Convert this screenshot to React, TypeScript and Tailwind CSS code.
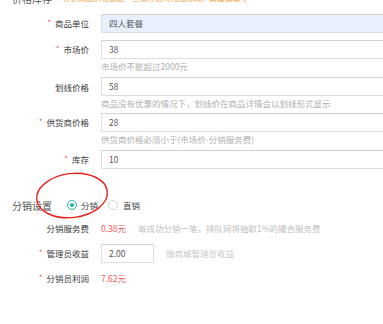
import React from "react";

const Star = () => <span className="text-[#f25a5a] text-[8px] mr-[4px] relative top-[-1px]">*</span>;

function Label({ req, children }: { req?: boolean; children: React.ReactNode }) {
  return (
    <div className="w-[89px] shrink-0 text-right text-[8.5px] text-[#3a3a3a] leading-[12px]">
      {req && <Star />}
      {children}
    </div>
  );
}

function Input({ value, filled, w }: { value: string; filled?: boolean; w?: string }) {
  return (
    <div
      className={`ml-[12px] h-[19px] flex items-center pl-[7px] border border-[#dedede] border-t-[#d2d2d2] text-[8.5px] text-[#555] ${
        filled ? "bg-[#e8f0fe] text-[#222]" : "bg-white"
      } ${w ?? "w-[320px] shrink-0"}`}
    >
      {value}
    </div>
  );
}

function Help({ children, mt }: { children: React.ReactNode; mt: string }) {
  return (
    <div className={`pl-[101px] h-[12px] leading-[12px] text-[8.5px] text-[#b0b0b0] whitespace-nowrap ${mt}`}>{children}</div>
  );
}

export default function App() {
  return (
    <div
      className="relative w-[383px] h-[324px] overflow-hidden bg-white"
      style={{ fontFamily: '"Noto Sans CJK SC", "Noto Sans", sans-serif' }}
    >
      <div className="flex items-center h-[20px] mt-[-12px] pl-[12px] whitespace-nowrap">
        <span className="text-[10px] text-[#555]">价格库存</span>
        <span className="ml-[11px] text-[7.7px] text-[#f5a03a]">分销商品价格数据一旦保存后将无法修改，请谨慎填写</span>
      </div>

      <div className="flex items-center mt-[6px]">
        <Label req>商品单位</Label>
        <Input value="四人套餐" filled />
      </div>
      <div className="flex items-center mt-[7px]">
        <Label req>市场价</Label>
        <Input value="38" />
      </div>
      <Help mt="mt-[1px]">市场价不能超过2000元</Help>
      <div className="flex items-center mt-[5px]">
        <Label>划线价格</Label>
        <Input value="58" />
      </div>
      <Help mt="mt-[1px]">商品没有优惠的情况下，划线价在商品详情会以划线形式显示</Help>
      <div className="flex items-center mt-[4px]">
        <Label req>供货商价格</Label>
        <Input value="28" />
      </div>
      <Help mt="mt-[1px]">供货商价格必须小于(市场价-分销服务费)</Help>
      <div className="flex items-center mt-[5px]">
        <Label req>库存</Label>
        <Input value="10" />
      </div>

      <div className="flex items-center h-[20px] mt-[26px] pl-[12px] whitespace-nowrap">
        <span className="text-[10px] text-[#555] w-[55px]">分销设置</span>
        <span className="w-[10px] h-[10px] rounded-full border border-[#22b3a5] flex items-center justify-center">
          <span className="w-[4px] h-[4px] rounded-full bg-[#22b3a5]" />
        </span>
        <span className="ml-[4px] text-[8.5px] text-[#444]">分销</span>
        <span className="ml-[10px] w-[10px] h-[10px] rounded-full border border-[#d6d6d6] bg-white" />
        <span className="ml-[5px] text-[8.5px] text-[#444]">直销</span>
      </div>

      <div className="flex items-center h-[14px] mt-[6px] whitespace-nowrap">
        <Label>分销服务费</Label>
        <span className="ml-[12px] text-[8.5px] text-[#f25a5a]">0.38元</span>
        <span className="ml-[12px] text-[8.5px] text-[#c0c0c0]">每成功分销一笔，排队网将抽取1%的撮合服务费</span>
      </div>

      <div className="flex items-center mt-[9px] whitespace-nowrap">
        <Label req>管理员收益</Label>
        <Input value="2.00" w="w-[53px] border-[#d4dcdc]" />
        <span className="ml-[12px] text-[8.5px] text-[#c8c8c8]">微商城管理员收益</span>
      </div>

      <div className="flex items-center h-[14px] mt-[8px] whitespace-nowrap">
        <Label req>分销员利润</Label>
        <span className="ml-[12px] text-[8.5px] text-[#f25a5a]">7.62元</span>
      </div>

      <svg className="absolute left-0 top-0 pointer-events-none" width="383" height="324">
        <ellipse
          cx="72"
          cy="195.5"
          rx="35.5"
          ry="22"
          fill="none"
          stroke="#e8231e"
          strokeWidth="1.4"
          transform="rotate(-7 72 195.5)"
        />
      </svg>
    </div>
  );
}
